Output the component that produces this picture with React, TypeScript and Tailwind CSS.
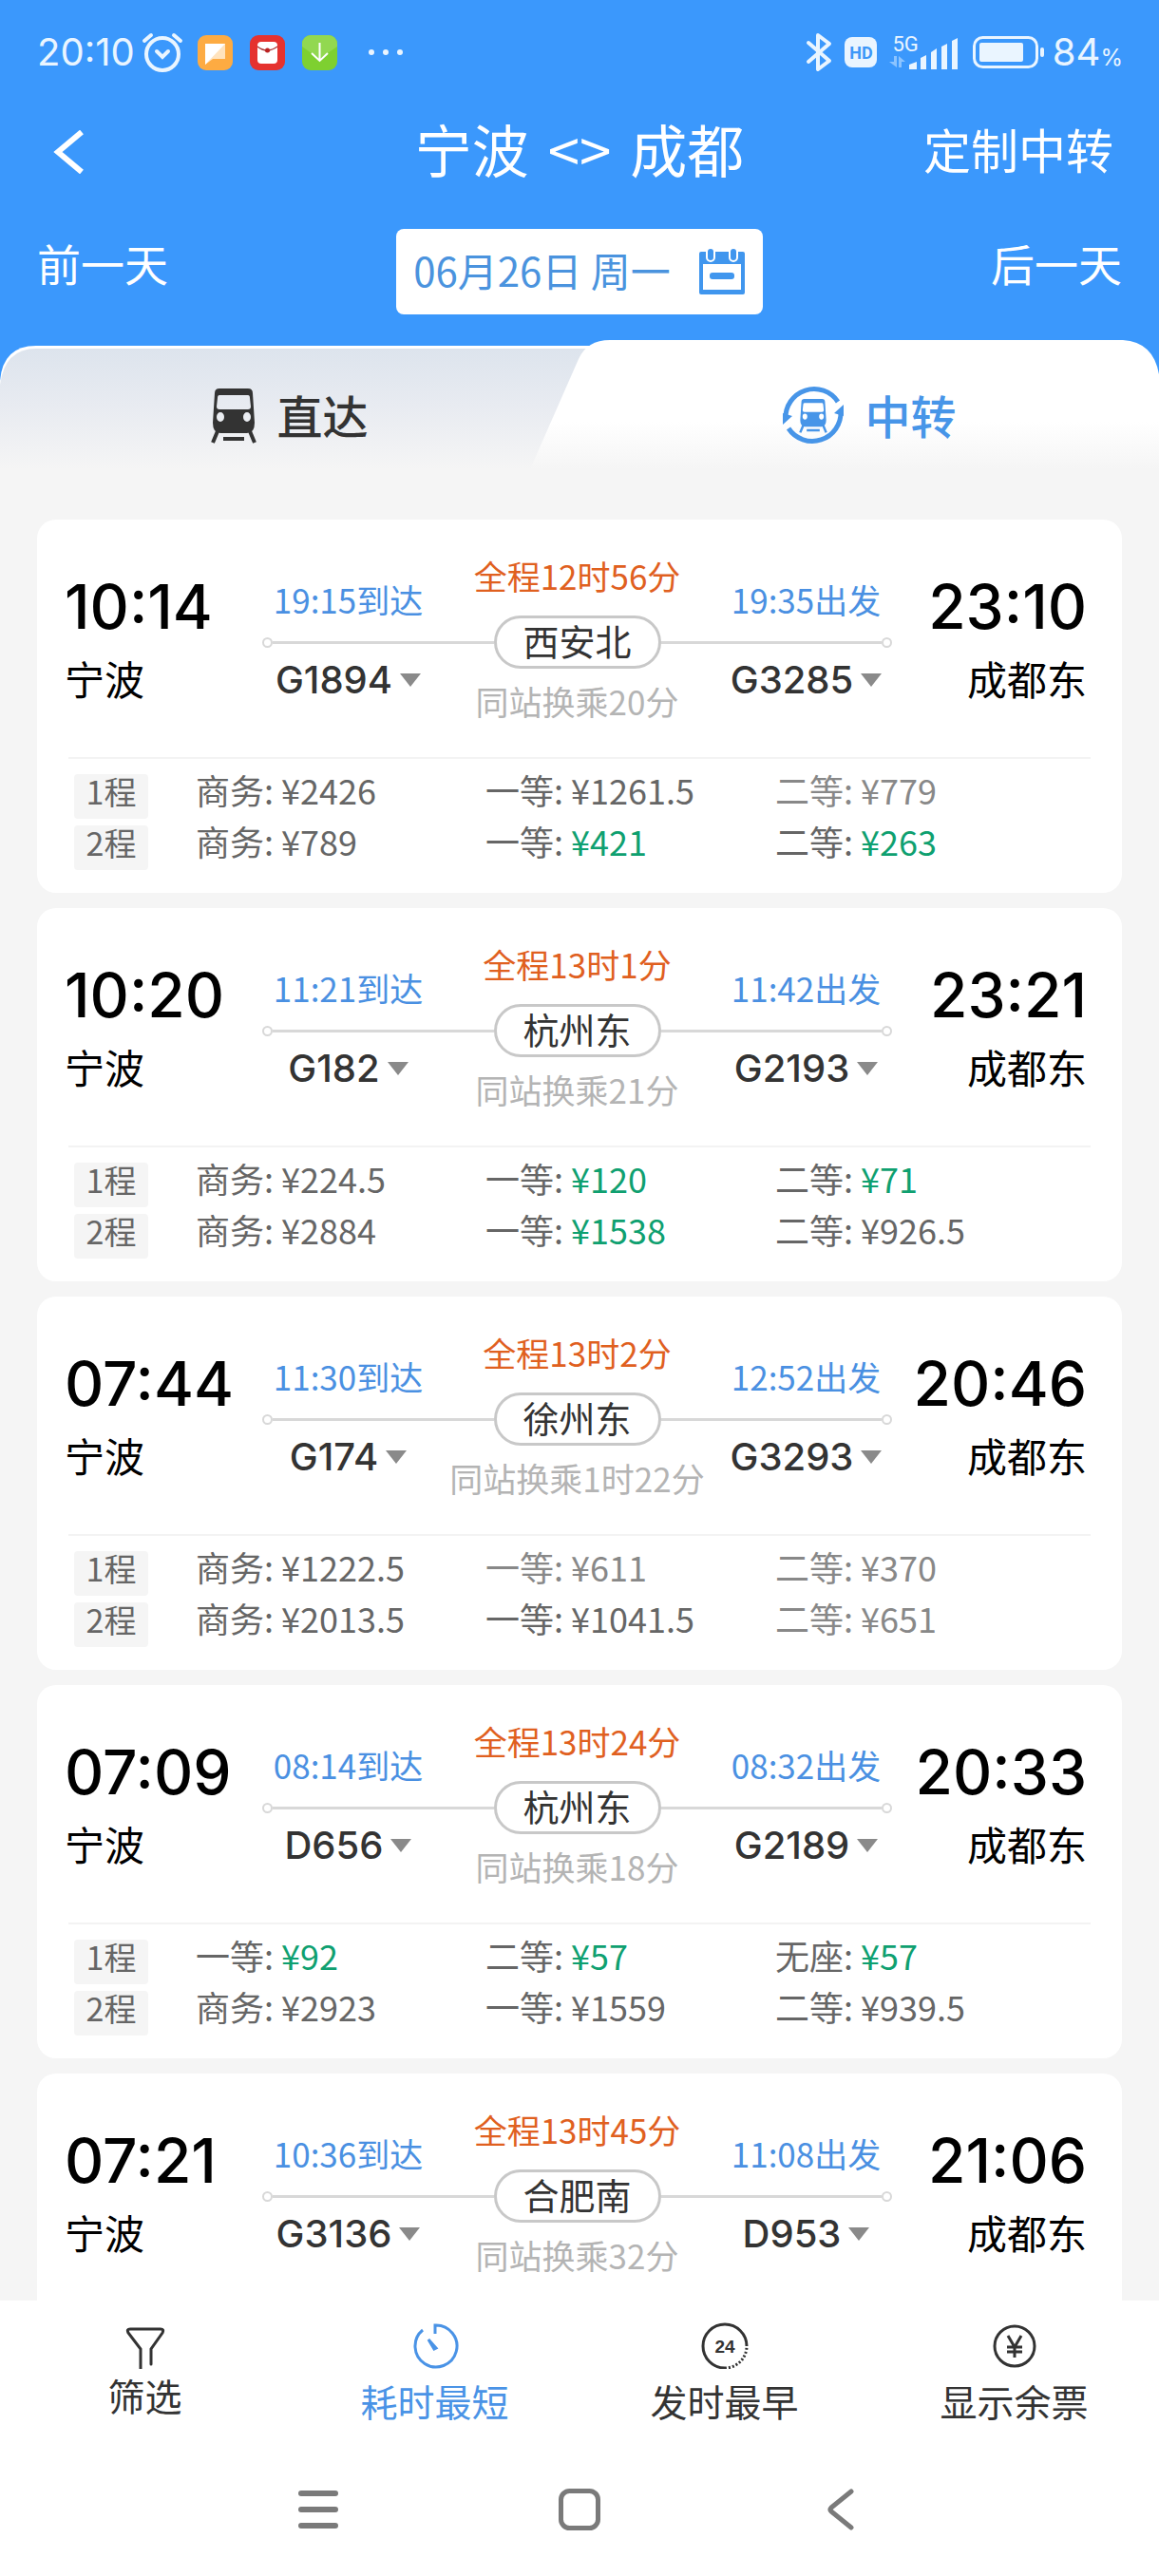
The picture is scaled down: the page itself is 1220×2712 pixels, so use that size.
import type { ReactNode } from "react";

type Fare = { seat: string; price: string; tone?: "green" | "light" };

type Trip = {
  depart: string;
  arrive: string;
  total: string;
  via: string;
  transfer: string;
  first: { time: string; train: string };
  second: { time: string; train: string };
  fares: Fare[][];
};

const trips: Trip[] = [
  {
    depart: "10:14",
    arrive: "23:10",
    total: "全程12时56分",
    via: "西安北",
    transfer: "同站换乘20分",
    first: { time: "19:15到达", train: "G1894" },
    second: { time: "19:35出发", train: "G3285" },
    fares: [
      [
        { seat: "商务", price: "¥2426" },
        { seat: "一等", price: "¥1261.5" },
        { seat: "二等", price: "¥779", tone: "light" },
      ],
      [
        { seat: "商务", price: "¥789" },
        { seat: "一等", price: "¥421", tone: "green" },
        { seat: "二等", price: "¥263", tone: "green" },
      ],
    ],
  },
  {
    depart: "10:20",
    arrive: "23:21",
    total: "全程13时1分",
    via: "杭州东",
    transfer: "同站换乘21分",
    first: { time: "11:21到达", train: "G182" },
    second: { time: "11:42出发", train: "G2193" },
    fares: [
      [
        { seat: "商务", price: "¥224.5" },
        { seat: "一等", price: "¥120", tone: "green" },
        { seat: "二等", price: "¥71", tone: "green" },
      ],
      [
        { seat: "商务", price: "¥2884" },
        { seat: "一等", price: "¥1538", tone: "green" },
        { seat: "二等", price: "¥926.5" },
      ],
    ],
  },
  {
    depart: "07:44",
    arrive: "20:46",
    total: "全程13时2分",
    via: "徐州东",
    transfer: "同站换乘1时22分",
    first: { time: "11:30到达", train: "G174" },
    second: { time: "12:52出发", train: "G3293" },
    fares: [
      [
        { seat: "商务", price: "¥1222.5" },
        { seat: "一等", price: "¥611", tone: "light" },
        { seat: "二等", price: "¥370", tone: "light" },
      ],
      [
        { seat: "商务", price: "¥2013.5" },
        { seat: "一等", price: "¥1041.5" },
        { seat: "二等", price: "¥651", tone: "light" },
      ],
    ],
  },
  {
    depart: "07:09",
    arrive: "20:33",
    total: "全程13时24分",
    via: "杭州东",
    transfer: "同站换乘18分",
    first: { time: "08:14到达", train: "D656" },
    second: { time: "08:32出发", train: "G2189" },
    fares: [
      [
        { seat: "一等", price: "¥92", tone: "green" },
        { seat: "二等", price: "¥57", tone: "green" },
        { seat: "无座", price: "¥57", tone: "green" },
      ],
      [
        { seat: "商务", price: "¥2923" },
        { seat: "一等", price: "¥1559" },
        { seat: "二等", price: "¥939.5" },
      ],
    ],
  },
  {
    depart: "07:21",
    arrive: "21:06",
    total: "全程13时45分",
    via: "合肥南",
    transfer: "同站换乘32分",
    first: { time: "10:36到达", train: "G3136" },
    second: { time: "11:08出发", train: "D953" },
    fares: [],
  },
];

function StatusBar() {
  return (
    <div className="flex h-[110px] items-center justify-between pr-[38px] pl-[39px] text-[#eaf5ff]">
      <div className="flex items-center">
        <span className="font-['Inter','Noto_Sans_CJK_SC',sans-serif] text-[40px] leading-none">20:10</span>
        <svg className="ml-[7px] size-11" viewBox="0 0 44 44" fill="none" stroke="currentColor" strokeLinecap="round" aria-hidden>
          <circle cx="22" cy="24" r="17" strokeWidth="4" />
          <path d="M16 21l6 6 6-6" strokeWidth="4" />
          <path d="M3 10l7-6M41 10l-7-6" strokeWidth="4" />
        </svg>
        <svg className="ml-[15px] size-[37px]" viewBox="0 0 37 37" aria-hidden>
          <rect width="37" height="37" rx="9" fill="#fdab42" />
          <path d="M8 9h21v16H16l-8 6z" fill="#ffe3bd" />
          <path d="M8 9h21L8 31z" fill="#fff" />
        </svg>
        <svg className="ml-[18px] size-[37px]" viewBox="0 0 37 37" aria-hidden>
          <rect width="37" height="37" rx="9" fill="#e5322f" />
          <rect x="8" y="7" width="21" height="23" rx="4" fill="#fff" />
          <path d="M8 12q10 8 21 0" fill="none" stroke="#a33" strokeWidth="1.5" />
          <circle cx="18.500" cy="16" r="2.500" fill="#b22" />
        </svg>
        <svg className="ml-[18px] size-[37px]" viewBox="0 0 37 37" aria-hidden>
          <rect width="37" height="37" rx="9" fill="#7ed030" />
          <path d="M0 9a9 9 0 0 1 9-9h19a9 9 0 0 1 9 9v3L18 25 0 12z" fill="#92d850" />
          <path d="M18.500 8v19M10 19l8.500 8 8.500-8" fill="none" stroke="#fff" strokeWidth="2" />
        </svg>
        <svg className="ml-8 h-2 w-10" viewBox="0 0 40 8" fill="currentColor" aria-hidden>
          <circle cx="4" cy="4" r="3" />
          <circle cx="19" cy="4" r="3" />
          <circle cx="34" cy="4" r="3" />
        </svg>
      </div>
      <div className="flex items-center">
        <svg className="h-[42px] w-7" viewBox="0 0 28 42" fill="none" stroke="currentColor" strokeWidth="4" strokeLinejoin="round" strokeLinecap="round" aria-hidden>
          <path d="M3 11l22 19-12 9V3l12 9L3 31" />
        </svg>
        <span className="ml-[13px] flex h-8 w-[34px] items-center justify-center rounded-lg bg-[#eaf5ff] font-['Roboto',sans-serif] text-[18px] font-bold text-[#3c97f8]">
          HD
        </span>
        <div className="ml-[13px] flex h-9 items-end">
          <div className="flex flex-col items-start">
            <span className="pl-[3px] font-['Roboto',sans-serif] text-[22px] leading-5">5G</span>
            <svg className="h-4 w-5" viewBox="0 0 20 16" fill="#8cc4ff" aria-hidden>
              <path d="M5 2h3v12L0 8h5zM10 14V2l7 6h-4v6z" />
            </svg>
          </div>
          <svg className="-ml-[10px] h-[34px] w-[52px]" viewBox="0 0 52 34" fill="currentColor" aria-hidden>
            <path d="M0 34v-5l8-3v8zM12 34V22l6-3v15zM23 34V16l6-4v22zM34 34V10l6-3v27zM45 34V4l6-3v33z" />
          </svg>
        </div>
        <svg className="ml-[15px] h-[34px] w-[76px]" viewBox="0 0 76 34" aria-hidden>
          <rect x="1.500" y="1.500" width="66" height="31" rx="9" fill="none" stroke="currentColor" strokeWidth="3" />
          <rect x="7" y="7" width="46" height="20" rx="2" fill="currentColor" />
          <rect x="71" y="12" width="4" height="10" rx="2" fill="currentColor" />
        </svg>
        <span className="ml-2 font-['Inter',sans-serif] text-[40px] leading-none">
          84<span className="text-[24px]">%</span>
        </span>
      </div>
    </div>
  );
}

function Header() {
  return (
    <header className="bg-[#3b98fc] text-white">
      <StatusBar />
      <div className="grid h-[100px] grid-cols-[1fr_auto_1fr] items-center px-12">
        <button type="button" aria-label="返回" className="justify-self-start pl-2">
          <svg className="h-[46px] w-8" viewBox="0 0 32 46" fill="none" stroke="currentColor" strokeWidth="6" aria-hidden>
            <path d="M30 2L5 23l25 21" />
          </svg>
        </button>
        <h1 className="flex gap-5 pb-2 text-[60px] leading-none">
          <span>宁波</span>
          <span>&lt;&gt;</span>
          <span>成都</span>
        </h1>
        <button type="button" className="justify-self-end pb-2 text-[50px] leading-none">
          定制中转
        </button>
      </div>
      <div className="flex h-[148px] items-center justify-between px-[39px] pt-1">
        <button type="button" className="pb-5 text-[46px] leading-none">
          前一天
        </button>
        <button
          type="button"
          className="flex h-[90px] items-center gap-[29px] rounded-lg bg-white pr-[18px] pl-[18px] text-[42px] leading-none text-[#4a93de]"
        >
          <span className="pb-1">06月26日 周一</span>
          <svg className="h-[50px] w-[50px]" viewBox="0 0 50 50" aria-hidden>
            <path d="M3 4h44a2 2 0 0 1 2 2v41a2 2 0 0 1-2 2H3a2 2 0 0 1-2-2V6a2 2 0 0 1 2-2z" fill="#4096ee" />
            <rect x="5" y="17" width="40" height="27" fill="#fff" />
            <rect x="9" y="0" width="8" height="14" rx="4" fill="#4096ee" stroke="#fff" strokeWidth="2" />
            <rect x="33" y="0" width="8" height="14" rx="4" fill="#4096ee" stroke="#fff" strokeWidth="2" />
            <rect x="12" y="26" width="26" height="7" rx="3" fill="#4096ee" />
          </svg>
        </button>
        <button type="button" className="pb-5 text-[46px] leading-none">
          后一天
        </button>
      </div>
    </header>
  );
}

function TrainIcon({ className }: { className: string }) {
  return (
    <svg className={className} viewBox="0 0 48 58" fill="none" aria-hidden>
      <path
        fillRule="evenodd"
        fill="currentColor"
        d="M9 0h30q5 0 5 5l2 31q0 11-8 11H10q-8 0-8-11L4 5q0-5 5-5zM9 7q-2 0-2 3l-1 9q0 3 3 3h30q3 0 3-3l-1-9q0-3-2-3zM10 25a4 5 0 1 0 0 10 4 5 0 0 0 0-10zM38 25a4 5 0 1 0 0 10 4 5 0 0 0 0-10z"
      />
      <path d="M7 45L2 57M41 45l5 12M13 53h22" stroke="currentColor" strokeWidth="4" />
    </svg>
  );
}

function Tabs() {
  return (
    <div className="relative bg-linear-to-b from-[#3b98fc] from-50% to-[#f5f5f5] to-50%">
      <svg className="absolute inset-0 size-full" viewBox="0 0 1220 143" preserveAspectRatio="none" aria-hidden>
        <defs>
          <linearGradient id="tab-idle" x1="0" y1="0" x2="0" y2="1">
            <stop offset="0" stopColor="#dde4ed" />
            <stop offset="0.450" stopColor="#e8ebf1" />
            <stop offset="0.950" stopColor="#f5f5f5" />
          </linearGradient>
          <linearGradient id="tab-active" x1="0" y1="0" x2="0" y2="1">
            <stop offset="0.600" stopColor="#fff" />
            <stop offset="0.950" stopColor="#f5f5f5" />
          </linearGradient>
        </defs>
        <path d="M0 143V43Q3 6 38 6H660V143z" fill="#fff" />
        <path d="M0 143V47Q5 9 38 9H660V143z" fill="url(#tab-idle)" />
        <path d="M555 143L609 20Q618 0 642 0H1182Q1214 2 1220 36V143z" fill="url(#tab-active)" />
      </svg>
      <div role="tablist" className="relative grid grid-cols-2 text-[48px] leading-none font-medium">
        <button type="button" role="tab" aria-selected="false" className="flex h-[143px] items-center justify-center gap-[21px] pt-4 text-[#333]">
          <TrainIcon className="h-[58px] w-12" />
          <span className="pb-1">直达</span>
        </button>
        <button type="button" role="tab" aria-selected="true" className="flex h-[143px] items-center justify-center gap-[21px] pt-4 text-[#4795e8]">
          <span className="relative flex size-[66px] items-center justify-center">
            <svg className="absolute inset-0 size-full" viewBox="0 0 66 66" fill="none" stroke="currentColor" strokeWidth="5" aria-hidden>
              <path d="M4 36A30 30 0 0 1 59 18" />
              <path d="M62 28A30 30 0 0 1 7 46" />
              <path d="M1 42V30l10 3zM65 21v12l-10-3z" fill="currentColor" stroke="none" />
            </svg>
            <TrainIcon className="h-[36px] w-8" />
          </span>
          <span className="pb-1">中转</span>
        </button>
      </div>
    </div>
  );
}

function Leg({ time, train }: { time: string; train: string }) {
  return (
    <>
      <span className="text-[35px] leading-[50px] text-[#4a90e2]">{time}</span>
      <button type="button" className="mt-[35px] flex items-center gap-2 font-['Inter',sans-serif] text-[40px] leading-[50px] font-medium text-[#333]">
        {train}
        <svg className="h-[14px] w-[22px]" viewBox="0 0 22 14" fill="#8a8a8a" aria-hidden>
          <path d="M0 0h22L11 14z" />
        </svg>
      </button>
    </>
  );
}

function Endpoint({ time, place, align }: { time: string; place: string; align: string }) {
  return (
    <div className={`flex flex-col pt-14 ${align}`}>
      <span className="font-['Inter',sans-serif] text-[64px] leading-[72px] font-medium text-black">{time}</span>
      <span className="mt-[14px] text-[42px] leading-[50px] text-black">{place}</span>
    </div>
  );
}

function Line({ children }: { children?: ReactNode }) {
  return (
    <div className="absolute inset-x-0 top-[101px] flex h-14 items-center">
      <span className="size-[11px] rounded-full border-2 border-[#d8d8d8]" />
      <span className="h-[3px] flex-1 bg-[#d8d8d8]" />
      {children}
      <span className="h-[3px] flex-1 bg-[#d8d8d8]" />
      <span className="size-[11px] rounded-full border-2 border-[#d8d8d8]" />
    </div>
  );
}

const tones = {
  green: "text-[#0fa070]",
  light: "text-[#888]",
};

function TripCard({ trip }: { trip: Trip }) {
  return (
    <article className="shrink-0 rounded-[20px] bg-white px-[29px] pb-6">
      <div className="grid grid-cols-[208px_1fr_205px] pr-2 pb-[34px]">
        <Endpoint time={trip.depart} place="宁波" align="items-start" />
        <div className="relative grid grid-cols-[181px_1fr_181px]">
          <Line>
            <span className="flex h-14 w-[176px] items-center justify-center rounded-full border-3 border-[#c8c8c8] pb-1 text-[38px] leading-none text-[#333]">
              {trip.via}
            </span>
          </Line>
          <div className="flex flex-col items-center pt-[59px]">
            <Leg {...trip.first} />
          </div>
          <div className="flex flex-col items-center gap-[82px] pt-[34px] text-[35px] leading-[50px] whitespace-nowrap">
            <span className="text-[#e0601f]">{trip.total}</span>
            <span className="text-[#b4b4b4]">{trip.transfer}</span>
          </div>
          <div className="flex flex-col items-center pt-[59px]">
            <Leg {...trip.second} />
          </div>
        </div>
        <Endpoint time={trip.arrive} place="成都东" align="items-end" />
      </div>
      <div className="mx-1 border-t-2 border-[#f3f3f3] pt-[9px]">
        <table className="w-full table-fixed text-left text-[36px] leading-[46px] text-[#666]">
          <tbody>
            {trip.fares.map((row, i) => (
              <tr key={i}>
                <th scope="row" className="w-[134px] pt-[7px] pl-[6px] font-normal">
                  <span className="block h-[47px] w-[78px] rounded bg-[#f5f5f5] text-center text-[34px] leading-9">{i + 1}程</span>
                </th>
                {row.map((fare) => (
                  <td key={fare.seat} className={`w-[305px] align-top last:w-auto ${fare.tone === "light" ? tones.light : ""}`}>
                    {fare.seat}: <span className={fare.tone ? tones[fare.tone] : ""}>{fare.price}</span>
                  </td>
                ))}
              </tr>
            ))}
          </tbody>
        </table>
      </div>
    </article>
  );
}

function SortItem({ label, active, tight, children }: { label: string; active?: boolean; tight?: boolean; children: ReactNode }) {
  return (
    <button type="button" className={`flex flex-col items-center ${tight ? "gap-0.5" : "gap-2"} ${active ? "text-[#4a93e6]" : "text-[#333]"}`}>
      <svg className="size-[50px]" viewBox="0 0 50 50" fill="none" stroke="currentColor" strokeWidth="3" aria-hidden>
        {children}
      </svg>
      <span className="text-[39px] leading-[50px]">{label}</span>
    </button>
  );
}

function BottomBar() {
  return (
    <footer className="bg-white pt-[22px]">
      <div className="grid grid-cols-4 items-start">
        <SortItem label="筛选" tight>
          <path d="M20 50V29L7 12q-2-4 2-4h32q4 0 2 4L31 29v16" strokeLinecap="round" />
        </SortItem>
        <SortItem label="耗时最短" active>
          <path d="M12 9A22 22 0 1 0 25 4v9" />
          <path d="M18 19l8 9-2 1z" fill="currentColor" />
        </SortItem>
        <SortItem label="发时最早">
          <path d="M25 49A23 23 0 1 1 48 26" />
          <path d="M25 49A23 23 0 0 0 48 26" strokeDasharray="2 2" />
          <text x="25" y="33" textAnchor="middle" fill="currentColor" stroke="none" className="font-['Liberation_Sans',sans-serif] text-[19px] font-bold">
            24
          </text>
        </SortItem>
        <SortItem label="显示余票">
          <circle cx="25" cy="26" r="21" />
          <path d="M18 15l7 12 7-12M25 27v11M17 27h16M17 32h16" />
        </SortItem>
      </div>
      <div className="mx-auto grid h-[160px] w-[825px] max-w-full grid-cols-3 items-center justify-items-center pt-5 text-[#7a7a7a]">
        <button type="button" aria-label="最近任务">
          <svg className="h-11 w-[42px]" viewBox="0 0 42 44" stroke="currentColor" strokeWidth="6" strokeLinecap="round" aria-hidden>
            <path d="M3 5h36M3 22h36M3 39h36" />
          </svg>
        </button>
        <button type="button" aria-label="主屏幕">
          <svg className="size-11" viewBox="0 0 44 44" fill="none" stroke="currentColor" strokeWidth="5" aria-hidden>
            <rect x="2.500" y="2.500" width="39" height="39" rx="9" />
          </svg>
        </button>
        <button type="button" aria-label="后退">
          <svg className="h-11 w-7" viewBox="0 0 28 44" fill="none" stroke="currentColor" strokeWidth="5" strokeLinecap="round" strokeLinejoin="round" aria-hidden>
            <path d="M25 3L4 20q-2 2 0 4l21 17" />
          </svg>
        </button>
      </div>
    </footer>
  );
}

export default function App() {
  return (
    <div className="flex h-screen flex-col bg-[#f5f5f5] font-['Noto_Sans_CJK_SC',sans-serif]">
      <Header />
      <Tabs />
      <main className="flex flex-1 flex-col gap-4 overflow-hidden px-[39px] pt-[46px]">
        {trips.map((trip) => (
          <TripCard key={trip.depart} trip={trip} />
        ))}
      </main>
      <BottomBar />
    </div>
  );
}
